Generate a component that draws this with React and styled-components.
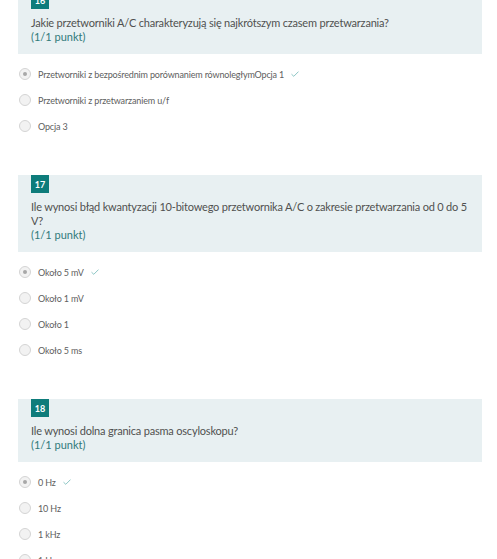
import React from "react";
import styled, { createGlobalStyle } from "styled-components";

const Global = createGlobalStyle`
  body {
    margin: 0;
    background: #ffffff;
    font-family: Lato, "Open Sans", sans-serif;
  }
`;

const Page = styled.div`
  margin-top: -9px;
  padding: 0 15px 0 18px;
  display: flex;
  flex-direction: column;
`;

const Question = styled.div`
  display: flex;
  flex-direction: column;
  margin-bottom: 36px;
`;

const Card = styled.div`
  background: #e8f0f2;
  padding: 0 13px 10px;
  display: flex;
  flex-direction: column;
`;

const Badge = styled.div`
  width: 18px;
  height: 18px;
  background: #0e7c7b;
  color: #fff;
  font-size: 9px;
  font-weight: 700;
  display: flex;
  align-items: center;
  justify-content: center;
  margin-bottom: 7px;
`;

const Title = styled.div`
  font-size: 11px;
  letter-spacing: -0.2px;
  line-height: 14px;
  color: #505050;
`;

const Points = styled(Title)`
  color: #307a7a;
  letter-spacing: 0;
`;

const Options = styled.div`
  display: flex;
  flex-direction: column;
  padding-top: 7px;
`;

const Option = styled.div`
  display: flex;
  align-items: center;
  height: 26px;
  padding-left: 1px;
`;

const Radio = styled.span`
  width: 10px;
  height: 10px;
  border-radius: 50%;
  border: 1px solid #d4d4d4;
  background: #f2f2f2;
  display: flex;
  align-items: center;
  justify-content: center;
  margin-right: 7px;
  &::after {
    content: "";
    width: 4px;
    height: 4px;
    border-radius: 50%;
    background: ${(p) => (p.$checked ? "#a8a8a8" : "transparent")};
  }
`;

const Label = styled.span`
  font-size: 9px;
  letter-spacing: -0.15px;
  color: #606060;
`;

const Check = styled.svg`
  margin-left: 7px;
  width: 8px;
  height: 6px;
`;

const questions = [
  {
    n: 16,
    title: ["Jakie przetworniki A/C charakteryzują się najkrótszym czasem przetwarzania?"],
    options: [
      "Przetworniki z bezpośrednim porównaniem równoległymOpcja 1",
      "Przetworniki z przetwarzaniem u/f",
      "Opcja 3",
    ],
  },
  {
    n: 17,
    title: [
      "Ile wynosi błąd kwantyzacji 10-bitowego przetwornika A/C o zakresie przetwarzania od 0 do 5",
      "V?",
    ],
    options: ["Około 5 mV", "Około 1 mV", "Około 1", "Około 5 ms"],
  },
  {
    n: 18,
    title: ["Ile wynosi dolna granica pasma oscyloskopu?"],
    options: ["0 Hz", "10 Hz", "1 kHz", "1 Hz"],
  },
];

export default function App() {
  return (
    <Page>
      <Global />
      {questions.map((q) => (
        <Question key={q.n}>
          <Card>
            <Badge>{q.n}</Badge>
            {q.title.map((t, i) => (
              <Title key={i}>{t}</Title>
            ))}
            <Points>(1/1 punkt)</Points>
          </Card>
          <Options>
            {q.options.map((o, i) => (
              <Option key={i}>
                <Radio $checked={i === 0} />
                <Label>{o}</Label>
                {i === 0 && (
                  <Check viewBox="0 0 8 6">
                    <path d="M0.5 3.2 L2.8 5.3 L7.5 0.6" fill="none" stroke="#7fbfbd" strokeWidth="0.9" />
                  </Check>
                )}
              </Option>
            ))}
          </Options>
        </Question>
      ))}
    </Page>
  );
}
